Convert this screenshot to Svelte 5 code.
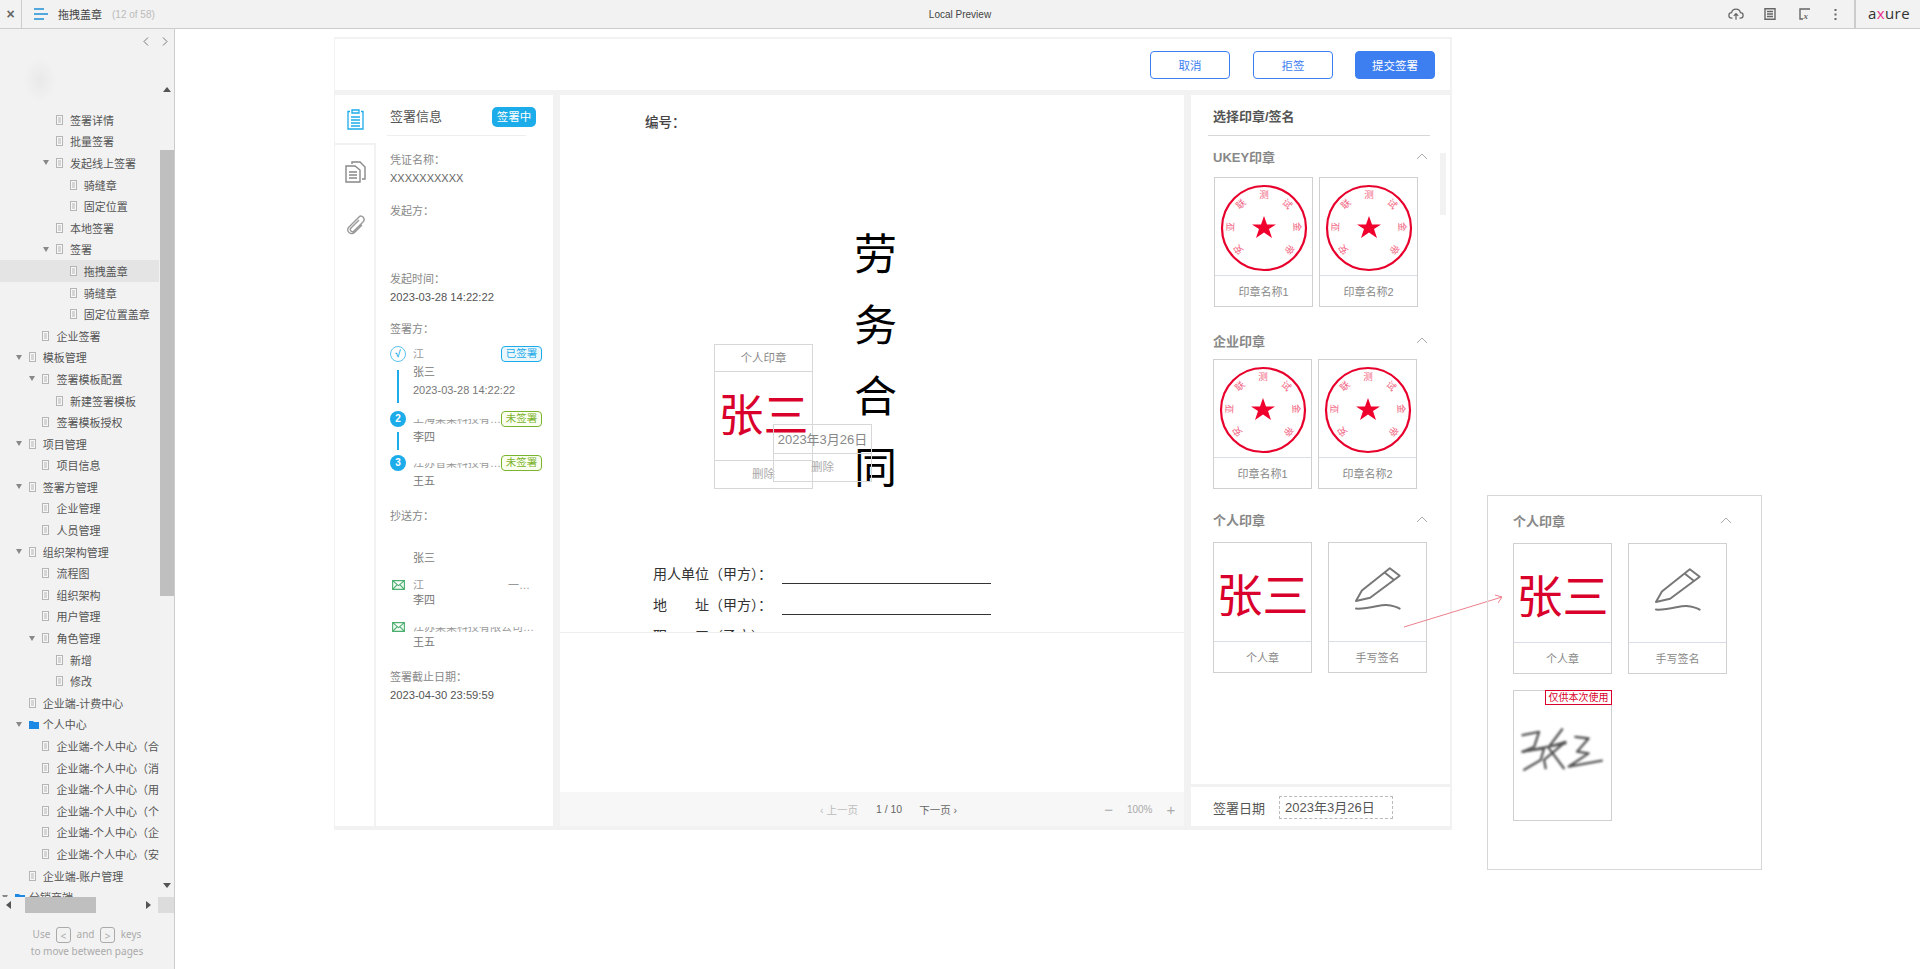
<script>
	const pages = [
		[3, 0, '签署详情'], [3, 0, '批量签署'], [3, 1, '发起线上签署'], [4, 0, '骑缝章'], [4, 0, '固定位置'],
		[3, 0, '本地签署'], [3, 1, '签署'], [4, 0, '拖拽盖章', 'active'], [4, 0, '骑缝章'], [4, 0, '固定位置盖章'],
		[2, 0, '企业签署'], [1, 1, '模板管理'], [2, 1, '签署模板配置'], [3, 0, '新建签署模板'], [2, 0, '签署模板授权'],
		[1, 1, '项目管理'], [2, 0, '项目信息'], [1, 1, '签署方管理'], [2, 0, '企业管理'], [2, 0, '人员管理'],
		[1, 1, '组织架构管理'], [2, 0, '流程图'], [2, 0, '组织架构'], [2, 0, '用户管理'], [2, 1, '角色管理'],
		[3, 0, '新增'], [3, 0, '修改'], [1, 0, '企业端-计费中心'], [1, 1, '个人中心', 'folder'],
		[2, 0, '企业端-个人中心（合'], [2, 0, '企业端-个人中心（消'], [2, 0, '企业端-个人中心（用'],
		[2, 0, '企业端-个人中心（个'], [2, 0, '企业端-个人中心（企'], [2, 0, '企业端-个人中心（安'],
		[1, 0, '企业端-账户管理'], [0, 1, '分销商端', 'folder']
	];

	const sealChars = [
		['安', -130], ['亚', -88], ['联', -44], ['测', 0], ['试', 44], ['金', 88], ['帝', 130]
	];
</script>

{#snippet docIcon()}
	<svg class="doc-icon" width="7" height="10" viewBox="0 0 7 10">
		<rect x="0.5" y="0.5" width="6" height="9" fill="#f7f7f7" stroke="#b5b5b5" />
		<path d="M2 3h3M2 5h3M2 7h3" stroke="#b5b5b5" />
	</svg>
{/snippet}

{#snippet folderIcon()}
	<svg class="doc-icon" width="10" height="9" viewBox="0 0 10 9">
		<path d="M0 1h4l1 1h5v7H0z" fill="#1e88e5" />
	</svg>
{/snippet}

{#snippet chevron()}
	<svg class="chevron" width="12" height="7" viewBox="0 0 12 7">
		<path d="M1 6l5-5 5 5" fill="none" stroke="#aaa" />
	</svg>
{/snippet}

{#snippet seal()}
	<svg width="88" height="88" viewBox="-44 -44 88 88">
		<circle r="42" fill="none" stroke="#e8002c" stroke-width="2.200" />
		{#each sealChars as [ch, deg]}
			<text transform="rotate({deg}) translate(0 -30)" class="seal-char" text-anchor="middle">{ch}</text>
		{/each}
		<path d="M0-12 3 -3.500H12L5 1 8 10 0 4.500-8 10-5 1-12-3.500H-3z" fill="#f0002d" />
	</svg>
{/snippet}

{#snippet sealCard(name)}
	<div class="card">
		<div class="card-pic seal-pic">{@render seal()}</div>
		<div class="card-name">{name}</div>
	</div>
{/snippet}

{#snippet personalCards()}
	<div class="card tall">
		<div class="card-pic"><span class="red-name">张三</span></div>
		<div class="card-name">个人章</div>
	</div>
	<div class="card tall">
		<div class="card-pic">
			<svg width="98" height="98" viewBox="445 160 295 295">
				<path d="M527 335l18-32 85-68 30 23-90 67zM614 248l30 24" fill="none" stroke="#777" stroke-width="6" stroke-linejoin="round" />
				<path d="M527 358c43 2 73-13 93-11s30 5 40 11" fill="none" stroke="#777" stroke-width="6" stroke-linecap="round" />
			</svg>
		</div>
		<div class="card-name">手写签名</div>
	</div>
{/snippet}

<div class="page">
	<header class="topbar">
		<div class="close">×</div>
		<svg class="menu" width="14" height="12" viewBox="0 0 14 12">
			<path d="M0 1h10M0 6h14M0 11h10" stroke="#1e8fd5" stroke-width="1.600" />
		</svg>
		<span class="page-name">拖拽盖章</span>
		<span class="page-count">(12 of 58)</span>
		<span class="preview">Local Preview</span>
		<div class="top-tools">
			<svg class="cloud" width="16" height="13" viewBox="0 0 18 14">
				<path d="M5 11H4C2 11 1 9.500 1 8s1-3 3-3c.5-2.500 2.500-4 5-4s4.500 1.500 5 4c2 0 3 1.500 3 3s-1 3-3 3h-1M9 13V6M6.500 8.500 9 6l2.500 2.500" fill="none" stroke="#666" stroke-width="1.400" />
			</svg>
			<svg width="12" height="12" viewBox="0 0 12 12">
				<path d="M1 .8h10v10.400H1zM3 3.500h6M3 6h6M3 8.500h6" fill="none" stroke="#666" stroke-width="1.400" />
			</svg>
			<svg width="12" height="12" viewBox="0 0 12 12">
				<path d="M11 1H1v10h3" fill="none" stroke="#666" stroke-width="1.400" />
				<text x="4.500" y="10.500" class="var-x">x</text>
			</svg>
			<svg width="3" height="11" viewBox="0 0 3 11">
				<path d="M.5 1h2M.5 5.500h2M.5 10h2" stroke="#666" stroke-width="2" />
			</svg>
		</div>
		<div class="logo">a<span>x</span>ure</div>
	</header>

	<div class="main">
		<aside class="sidebar">
			<div class="side-nav">
				<svg width="6" height="9" viewBox="0 0 6 9"><path d="M5 .5 1 4.500l4 4" fill="none" stroke="#777" /></svg>
				<svg width="6" height="9" viewBox="0 0 6 9"><path d="M1 .5l4 4-4 4" fill="none" stroke="#777" /></svg>
			</div>
			<div class="side-scroll">
				<ul class="tree">
					{#each pages as [level, open, label, kind]}
						<li class="row" class:active={kind === 'active'} style="padding-left: {13.7 * level + 1}px">
							<span class="arrow-slot">{#if open}<i></i>{/if}</span>
							<span class="icon-slot">
								{#if kind === 'folder'}{@render folderIcon()}{:else}{@render docIcon()}{/if}
							</span>
							<span class="label">{label}</span>
						</li>
					{/each}
				</ul>
				<div class="vtrack">
					<i class="tri up"></i>
					<div class="vthumb"></div>
					<i class="tri down"></i>
				</div>
			</div>
			<div class="hscroll">
				<i class="tri left"></i>
				<div class="hthumb"></div>
				<i class="tri right"></i>
				<div class="corner"></div>
			</div>
			<div class="keys">
				<div>Use <kbd>&lt;</kbd> and <kbd>&gt;</kbd> keys</div>
				<div>to move between pages</div>
			</div>
		</aside>

		<main class="canvas">
			<section class="sign-card">
				<div class="actions">
					<button class="btn">取消</button>
					<button class="btn">拒签</button>
					<button class="btn primary">提交签署</button>
				</div>

				<div class="info-col">
					<nav class="tabs">
						<div class="tab on">
							<svg width="17" height="21" viewBox="0 0 17 21">
								<path d="M3 2.500H1v17.500h15V2.500h-2M5 1h7v3H5zM4 8h9M4 11h9M4 14h9M4 17h9" fill="none" stroke="#1bace9" stroke-width="1.300" />
							</svg>
						</div>
						<div class="tab">
							<svg width="21" height="22" viewBox="0 0 21 22">
								<path d="M7 3V1h8l5 5v12h-3M1 5h9l5 4v12H1zM4 11h8M4 14h8M4 17h8" fill="none" stroke="#888" stroke-width="1.400" />
							</svg>
						</div>
						<div class="tab">
							<svg width="20" height="20" viewBox="0 0 20 20">
								<path d="M13 5 5 13c-2 2 1 5 3 3l9-9c3-3-1-8-4-5L3 12c-4 4 2 9 6 5l7-7" fill="none" stroke="#999" stroke-width="1.400" />
							</svg>
						</div>
					</nav>
					<div class="info">
						<div class="info-head">
							<h2>签署信息</h2>
							<span class="badge">签署中</span>
						</div>
						<div class="field first">
							<p class="lab">凭证名称：</p>
							<p>XXXXXXXXXX</p>
						</div>
						<div class="field"><p class="lab">发起方：</p></div>
						<div class="field wide">
							<p class="lab">发起时间：</p>
							<p class="dark">2023-03-28 14:22:22</p>
						</div>
						<div class="field signers-title"><p class="lab">签署方：</p></div>

						<div class="signer one">
							<div class="marker">
								<span class="dot hollow">√</span>
								<i class="link"></i>
							</div>
							<div class="who">
								<p class="smudge s-first">江</p>
								<p>张三</p>
								<p>2023-03-28 14:22:22</p>
							</div>
							<span class="state done">已签署</span>
						</div>
						<div class="signer two">
							<div class="marker">
								<span class="dot">2</span>
								<i class="link"></i>
							</div>
							<div class="who">
								<p class="smudge s-low">上海某某科技有…</p>
								<p>李四</p>
							</div>
							<span class="state todo">未签署</span>
						</div>
						<div class="signer three">
							<div class="marker"><span class="dot">3</span></div>
							<div class="who">
								<p class="smudge s-low">江苏省某科技有…</p>
								<p>王五</p>
							</div>
							<span class="state todo">未签署</span>
						</div>

						<div class="field cc-title"><p class="lab">抄送方：</p></div>
						<div class="cc cc-one"><p>张三</p></div>
						<div class="cc cc-two">
							<svg width="13" height="10" viewBox="0 0 13 10">
								<path d="M.6.6h11.800v8.800H.6zM.6.6l5.900 5 5.900-5M.6 9.400 5 4.800M12.400 9.400 8 4.800" fill="#eefaf2" stroke="#4cae6e" stroke-width="1.100" />
							</svg>
							<p class="smudge s-first">江<span class="tail">一…</span></p>
							<p class="cc-name">李四</p>
						</div>
						<div class="cc cc-three">
							<svg width="13" height="10" viewBox="0 0 13 10">
								<path d="M.6.6h11.800v8.800H.6zM.6.6l5.900 5 5.900-5M.6 9.400 5 4.800M12.400 9.400 8 4.800" fill="#eefaf2" stroke="#4cae6e" stroke-width="1.100" />
							</svg>
							<p class="smudge s-low">江苏某某科技有限公司…</p>
							<p class="cc-name">王五</p>
						</div>

						<div class="field deadline">
							<p class="lab">签署截止日期：</p>
							<p class="dark">2023-04-30 23:59:59</p>
						</div>
					</div>
				</div>

				<div class="doc-col">
					<div class="doc">
						<p class="doc-no">编号：</p>
						<div class="doc-title">
							<span>劳</span><span>务</span><span>合</span><span>同</span>
						</div>
						<p class="doc-line">用人单位（甲方）：<u></u></p>
						<p class="doc-line">地&emsp;&emsp;址（甲方）：<u></u></p>
						<p class="doc-line">职&emsp;&emsp;工（乙方）：<u></u></p>
					</div>
					<div class="doc-blank"></div>
					<div class="pager">
						<span class="off">‹ 上一页</span>
						<span class="num">1 / 10</span>
						<span>下一页 ›</span>
						<span class="zoom"><b>−</b><em>100%</em><b>+</b></span>
					</div>

					<div class="drop name-drop">
						<div class="drop-head">个人印章</div>
						<div class="drop-body"><span class="red-name">张三</span></div>
						<div class="drop-foot">删除</div>
					</div>
					<div class="drop date-drop">
						<div class="date-text">2023年3月26日</div>
						<div class="drop-foot">删除</div>
					</div>
				</div>

				<div class="stamp-col">
					<div class="stamp-list">
						<h2 class="stamp-title">选择印章/签名</h2>
						<div class="stamp-bar"></div>
						<div class="group-head ukey"><h3>UKEY印章</h3>{@render chevron()}</div>
						<div class="cards ukey-cards">
							{@render sealCard('印章名称1')}
							{@render sealCard('印章名称2')}
						</div>
						<div class="group-head"><h3>企业印章</h3>{@render chevron()}</div>
						<div class="cards">
							{@render sealCard('印章名称1')}
							{@render sealCard('印章名称2')}
						</div>
						<div class="group-head personal"><h3>个人印章</h3>{@render chevron()}</div>
						<div class="cards gap">{@render personalCards()}</div>
					</div>
					<div class="sign-date">
						<span>签署日期</span>
						<div class="date-input">2023年3月26日</div>
					</div>
				</div>
			</section>

			<svg class="note-arrow" width="104" height="36" viewBox="0 0 104 36">
				<path d="M2 33 100 3M93 1l7 2-4 6" fill="none" stroke="#ec808d" />
			</svg>

			<section class="note">
				<div class="group-head"><h3>个人印章</h3>{@render chevron()}</div>
				<div class="cards gap">
					{@render personalCards()}
					<div class="card tall sign-pic">
						<span class="once">仅供本次使用</span>
						<svg width="98" height="130" viewBox="99 603 297 390">
							<g fill="none" stroke="#555" stroke-width="7" stroke-linecap="round" stroke-linejoin="round" filter="url(#soft)">
								<path d="M125 735l50-10-15 45-35 15 65-10-10 35-50 30" />
								<path d="M245 717l-40 53 50-15-65 55 5 25M205 775l45 60M125 785l130-25" />
								<path d="M285 740l40 5-35 40 35 5-60 40 100-18" />
							</g>
							<defs>
								<filter id="soft"><feGaussianBlur stdDeviation="2.500" /></filter>
							</defs>
						</svg>
					</div>
				</div>
			</section>
		</main>
	</div>
</div>

<style>
	:global(body) {
		margin: 0;
		background: #fff;
		font-family: "Liberation Sans", "Noto Sans CJK SC", sans-serif;
	}

	p, h2, h3, ul {
		margin: 0;
		padding: 0;
		font-weight: normal;
	}

	.page {
		display: flex;
		flex-direction: column;
		height: 969px;
		overflow: hidden;
	}

	/* Top bar */

	.topbar {
		display: flex;
		align-items: center;
		flex: none;
		height: 28px;
		border-bottom: 1px solid #ccc;
		background: #f2f2f2;
		color: #555;
		position: relative;
	}

	.close {
		width: 21px;
		height: 28px;
		border-right: 1px solid #ccc;
		text-align: center;
		line-height: 28px;
		font-size: 14px;
		font-weight: bold;
		color: #666;
	}

	.menu {
		margin-left: 12px;
	}

	.page-name {
		margin-left: 10px;
		font-size: 11px;
		color: #444;
	}

	.page-count {
		margin-left: 10px;
		font-size: 10px;
		color: #bbb;
	}

	.preview {
		position: absolute;
		left: 0;
		right: 0;
		text-align: center;
		font-size: 10px;
		color: #444;
	}

	.top-tools {
		display: flex;
		align-items: center;
		gap: 23px;
		margin-left: auto;
		margin-right: 17px;
	}

	.top-tools .cloud {
		margin-right: -3px;
	}

	.top-tools .var-x {
		font: italic bold 9px "Liberation Serif", serif;
		fill: #666;
	}

	.logo {
		box-sizing: border-box;
		width: 66px;
		height: 28px;
		padding-left: 12px;
		border-left: 2px solid #ccc;
		line-height: 27px;
		font-family: "Open Sans", sans-serif;
		font-size: 15px;
		letter-spacing: 0.4px;
		color: #333;
	}

	.logo span {
		color: #e8308a;
	}

	/* Sidebar */

	.main {
		display: flex;
		flex: 1;
		min-height: 0;
	}

	.sidebar {
		display: flex;
		flex-direction: column;
		flex: none;
		box-sizing: border-box;
		width: 175px;
		border-right: 1px solid #ccc;
		background: #f2f2f2;
	}

	.side-nav {
		display: flex;
		justify-content: flex-end;
		align-items: center;
		gap: 13px;
		flex: none;
		height: 25px;
		padding-right: 6px;
	}

	.side-scroll {
		display: flex;
		flex: none;
		height: 843px;
	}

	.tree {
		flex: none;
		box-sizing: border-box;
		width: 159px;
		padding-top: 55px;
		overflow: hidden;
		list-style: none;
		background: radial-gradient(ellipse 16px 22px at 40px 26px, #e9e9e9, transparent) no-repeat;
	}

	.row {
		display: flex;
		align-items: center;
		box-sizing: border-box;
		height: 21.600px;
		white-space: nowrap;
		font-size: 11px;
		color: #555;
	}

	.row.active {
		background: #e4e4e4;
	}

	.arrow-slot {
		flex: none;
		width: 14px;
	}

	.arrow-slot i {
		display: block;
		width: 0;
		height: 0;
		margin-left: 1px;
		border: 3px solid transparent;
		border-top: 5px solid #888;
		border-bottom: 0;
	}

	.icon-slot {
		display: flex;
		flex: none;
		width: 14px;
	}

	.vtrack {
		display: flex;
		flex-direction: column;
		align-items: center;
		flex: 1;
		padding-top: 33px;
	}

	.vthumb {
		flex: none;
		width: 14px;
		height: 446px;
		margin-top: 58px;
		background: #bfbfbf;
	}

	.tri {
		flex: none;
		width: 0;
		height: 0;
		border: 4px solid transparent;
	}

	.tri.up {
		border-bottom: 5px solid #555;
		border-top: 0;
	}

	.tri.down {
		margin-top: 287px;
		border-top: 5px solid #555;
		border-bottom: 0;
	}

	.tri.left {
		margin-left: 6px;
		border-right: 5px solid #555;
		border-left: 0;
	}

	.tri.right {
		margin-left: 50px;
		border-left: 5px solid #555;
		border-right: 0;
	}

	.hscroll {
		display: flex;
		align-items: center;
		flex: none;
		height: 16px;
	}

	.hthumb {
		flex: none;
		width: 71px;
		height: 16px;
		margin-left: 14px;
		background: #bfbfbf;
	}

	.corner {
		flex: none;
		width: 16px;
		height: 16px;
		margin-left: auto;
		background: #dcdcdc;
	}

	.keys {
		padding-top: 13px;
		text-align: center;
		line-height: 16px;
		font-size: 10px;
		color: #aaa;
		font-family: "Noto Sans", sans-serif;
	}

	kbd {
		display: inline-block;
		box-sizing: border-box;
		width: 15px;
		height: 16px;
		margin: 0 3px;
		border: 1px solid #aaa;
		border-radius: 3px;
		line-height: 12px;
		font: inherit;
		vertical-align: middle;
	}

	/* Canvas */

	.canvas {
		position: relative;
		flex: 1;
		padding: 8px 0 0 159px;
	}

	.sign-card {
		display: grid;
		grid-template-columns: 218px 624px 259px;
		grid-template-rows: 51px 731px;
		column-gap: 7px;
		row-gap: 5px;
		box-sizing: border-box;
		width: 1118px;
		height: 793px;
		padding: 2px 2px 4px 1px;
		background: #f2f2f2;
	}

	.actions {
		display: flex;
		justify-content: flex-end;
		align-items: center;
		gap: 23px;
		grid-column: 1 / -1;
		padding-right: 15px;
		background: #fff;
	}

	.btn {
		box-sizing: border-box;
		width: 80px;
		height: 28px;
		padding: 0;
		border: 1px solid #3d7ef0;
		border-radius: 4px;
		background: #fff;
		font: inherit;
		font-size: 11.500px;
		color: #3d7ef0;
	}

	.btn.primary {
		margin-left: -1px;
		background: #3d7ef0;
		color: #fff;
	}

	/* Signing info */

	.info-col {
		display: flex;
		background: #fff;
		font-size: 11px;
		line-height: 18px;
		color: #666;
	}

	.tabs {
		flex: none;
		width: 41px;
		background: linear-gradient(#f2f2f2, #f2f2f2) right 0 / 2px 100% no-repeat;
	}

	.tab {
		display: flex;
		justify-content: center;
		align-items: center;
		box-sizing: border-box;
		height: 52px;
	}

	.tab:nth-child(2) {
		height: 54px;
	}

	.tab.on {
		width: 41px;
		height: 50px;
		border-bottom: 2px solid #f2f2f2;
		background: #fff;
	}

	.info {
		flex: 1;
		padding-left: 14px;
		min-width: 0;
	}

	.info-head {
		display: flex;
		justify-content: space-between;
		align-items: center;
		box-sizing: border-box;
		height: 41px;
		margin: 0 27px 0 -3px;
		padding: 3px 0 0 3px;
		border-bottom: 1px solid #eee;
	}

	.info-head h2 {
		font-size: 13px;
		color: #555;
	}

	.badge {
		width: 44px;
		height: 20px;
		margin-right: -10px;
		border-radius: 5px;
		background: #1bace9;
		text-align: center;
		line-height: 20px;
		font-size: 11.500px;
		color: #fff;
	}

	.field {
		margin-top: 15px;
	}

	.field.wide {
		margin-top: 50px;
	}

	.field.signers-title {
		margin-top: 14px;
		margin-bottom: 7px;
	}

	.field.cc-title {
		margin-top: 17px;
	}

	.field.deadline {
		margin-top: 17px;
	}

	.lab {
		color: #888;
	}

	.dark {
		color: #555;
		font-size: 11.200px;
	}

	.signer {
		display: grid;
		grid-template-columns: 23px 88px 41px;
		align-items: start;
		color: #777;
	}

	.signer.one {
		padding-bottom: 11px;
	}

	.signer.two {
		padding-bottom: 8px;
	}

	.who {
		white-space: nowrap;
	}

	.marker {
		display: flex;
		flex-direction: column;
		align-items: center;
		width: 16px;
		padding-top: 1px;
	}

	.one .marker,
	.two .marker {
		margin-bottom: -4px;
	}

	.dot {
		flex: none;
		box-sizing: border-box;
		width: 16px;
		height: 16px;
		border-radius: 50%;
		background: #1bace9;
		text-align: center;
		line-height: 16px;
		font-size: 10px;
		font-weight: bold;
		color: #fff;
	}

	.dot.hollow {
		border: 1px solid #5cc2ee;
		background: #fff;
		line-height: 13px;
		color: #1bace9;
	}

	.link {
		display: block;
		flex: none;
		width: 2px;
		background: #1bace9;
	}

	.one .link {
		height: 33px;
		margin-top: 8px;
	}

	.two .link {
		height: 18px;
		margin-top: 5px;
	}

	.state {
		box-sizing: border-box;
		height: 16px;
		margin-top: 1px;
		border: 1px solid;
		border-radius: 4px;
		text-align: center;
		line-height: 13px;
		font-size: 10.500px;
	}

	.state.done {
		border-color: #1bace9;
		background: #eaf7fd;
		color: #1bace9;
	}

	.state.todo {
		border-color: #7cb32e;
		background: #fbfff0;
		color: #7cb32e;
	}

	.smudge {
		overflow: hidden;
		white-space: nowrap;
		color: #999;
	}

	.s-first {
		clip-path: inset(4px 0 3px 0);
	}

	.s-low {
		clip-path: inset(9px 0 3px 0);
	}

	.tail {
		margin-left: 84px;
	}

	.cc {
		display: grid;
		grid-template-columns: 23px 1fr;
		align-items: center;
		color: #777;
	}

	.cc p {
		grid-column: 2;
	}

	.cc svg {
		grid-column: 1;
		grid-row: 1;
		margin-left: 2px;
	}

	.cc .smudge {
		grid-row: 1;
	}

	.cc-one {
		margin-top: 24px;
	}

	.cc-two,
	.cc-three {
		margin-top: 9px;
	}

	.cc-name {
		margin-top: -3px;
	}

	/* Document */

	.doc-col {
		position: relative;
		display: flex;
		flex-direction: column;
		background: #fff;
	}

	.doc {
		flex: none;
		box-sizing: border-box;
		height: 538px;
		padding: 20px 0 0 85px;
		border-bottom: 1px solid #eee;
		overflow: hidden;
		color: #333;
	}

	.doc-no {
		line-height: 16px;
		font-size: 13.500px;
		font-weight: 500;
		color: #444;
	}

	.doc-title {
		display: flex;
		flex-direction: column;
		width: 44px;
		margin: 89px 0 49px 209px;
		line-height: 71px;
		font-size: 43px;
		color: #000;
	}

	.doc-line {
		display: flex;
		align-items: flex-end;
		height: 31px;
		padding-left: 8px;
		line-height: 20px;
		font-size: 14px;
	}

	.doc-line u {
		display: block;
		width: 209px;
		height: 4px;
		margin-left: 10px;
		border-bottom: 1px solid #333;
	}

	.doc-blank {
		flex: 1;
	}

	.pager {
		display: flex;
		align-items: center;
		flex: none;
		height: 34px;
		padding-left: 260px;
		background: #f7f7f7;
		font-size: 10.500px;
		white-space: nowrap;
		color: #666;
	}

	.pager .off {
		color: #bbb;
	}

	.pager .num {
		margin: 0 17px 0 18px;
	}

	.zoom {
		display: flex;
		align-items: center;
		margin-left: 147px;
		color: #aaa;
	}

	.zoom b {
		font-size: 15px;
		font-weight: normal;
	}

	.zoom em {
		margin: 0 14px;
		font-style: normal;
		font-size: 10px;
	}

	.drop {
		position: absolute;
		box-sizing: border-box;
		width: 99px;
		border: 1px solid #d7d7d7;
		text-align: center;
		font-size: 11.500px;
		color: #888;
	}

	.name-drop {
		left: 154px;
		top: 249px;
		height: 145px;
	}

	.drop-head {
		height: 26px;
		border-bottom: 1px solid #d7d7d7;
		line-height: 26px;
	}

	.drop-body {
		height: 88px;
		border-bottom: 1px solid #d7d7d7;
		line-height: 90px;
	}

	.drop-foot {
		line-height: 26px;
		color: #aaa;
	}

	.date-drop {
		left: 213px;
		top: 329px;
		height: 58px;
	}

	.date-text {
		height: 28px;
		border-bottom: 1px solid #d7d7d7;
		line-height: 30px;
		font-size: 13px;
		white-space: nowrap;
	}

	.red-name {
		font-size: 45px;
		color: #d9002b;
		white-space: nowrap;
	}

	.card .red-name {
		font-size: 46px;
	}

	/* Stamp picker */

	.stamp-col {
		display: flex;
		flex-direction: column;
		background: linear-gradient(#f2f2f2, #f2f2f2) 0 689px / 100% 3px no-repeat #fff;
	}

	.stamp-list {
		position: relative;
		flex: none;
		box-sizing: border-box;
		height: 692px;
		padding: 12px 20px 0 22px;
	}

	.stamp-title {
		height: 28px;
		margin-left: -5px;
		padding-left: 5px;
		border-bottom: 1px solid #d7d7d7;
		line-height: 20px;
		font-size: 13px;
		font-weight: bold;
		color: #555;
	}

	.stamp-bar {
		position: absolute;
		left: 249px;
		top: 58px;
		width: 6px;
		height: 62px;
		background: #f2f2f2;
	}

	.group-head {
		display: flex;
		justify-content: space-between;
		align-items: center;
		height: 20px;
		margin-top: 23px;
		margin-bottom: 9px;
		padding-right: 2px;
	}

	.group-head.ukey {
		margin-top: 10px;
		margin-bottom: 11px;
	}

	.group-head.personal {
		margin-top: 20px;
		margin-bottom: 13px;
	}

	.group-head h3 {
		font-size: 13px;
		font-weight: bold;
		color: #888;
	}

	.cards {
		display: flex;
		flex-wrap: wrap;
		gap: 6px;
	}

	.ukey-cards {
		margin-left: 1px;
	}

	.cards.gap {
		gap: 16px;
	}

	.card {
		display: flex;
		flex-direction: column;
		position: relative;
		box-sizing: border-box;
		width: 99px;
		height: 130px;
		border: 1px solid #d0d0d0;
	}

	.card.tall {
		height: 131px;
	}

	.card-pic {
		display: flex;
		justify-content: center;
		align-items: center;
		flex: none;
		height: 98px;
		border-bottom: 1px solid #d9dfe8;
		overflow: hidden;
	}

	.seal-pic {
		box-sizing: border-box;
		padding-top: 2px;
	}

	.card-name {
		text-align: center;
		line-height: 32px;
		font-size: 11px;
		color: #888;
	}

	.seal-char {
		font-size: 9.500px;
		fill: #f2637f;
	}

	.sign-pic {
		display: block;
	}

	.sign-pic svg {
		display: block;
	}

	.once {
		position: absolute;
		top: -1px;
		right: -1px;
		box-sizing: border-box;
		width: 67px;
		height: 15px;
		border: 1px solid #d9002b;
		text-align: center;
		line-height: 13px;
		font-size: 10px;
		white-space: nowrap;
		color: #d9002b;
		background: #fff;
	}

	.sign-date {
		display: flex;
		align-items: center;
		gap: 14px;
		flex: 1;
		padding: 2px 0 0 22px;
		font-size: 13px;
		color: #555;
	}

	.date-input {
		box-sizing: border-box;
		width: 114px;
		height: 23px;
		padding-left: 5px;
		border: 1px dashed #bbb;
		line-height: 21px;
	}

	/* Annotation */

	.note-arrow {
		position: absolute;
		left: 1227px;
		top: 565px;
	}

	.note {
		position: absolute;
		left: 1312px;
		top: 466px;
		box-sizing: border-box;
		width: 275px;
		height: 375px;
		padding: 0 25px;
		border: 1px solid #d7d7d7;
	}

	.note .group-head {
		margin-top: 14px;
		margin-bottom: 13px;
		padding-right: 4px;
	}
</style>
